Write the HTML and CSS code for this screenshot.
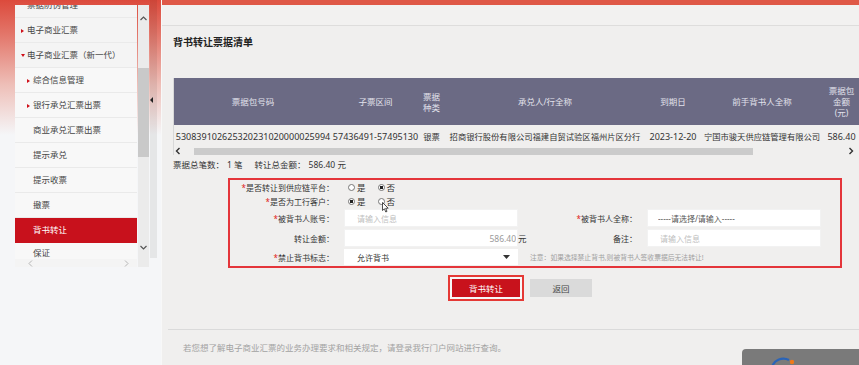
FILE: index.html
```html
<!DOCTYPE html>
<html lang="zh-CN">

<head>
  <meta charset="UTF-8" />
  <meta name="viewport" content="width=device-width, initial-scale=1.0" />
  <title>背书转让</title>
  <link rel="stylesheet" href="styles.css">
</head>

<body>
  <div class="page">
    <aside class="side">
      <div class="menu-box">
        <div class="menu">
          <ul class="menu-list">
            <li class="item top">票据防伪管理</li>
            <li class="item top"><span class="tri"></span>电子商业汇票</li>
            <li class="item top"><span class="tri down"></span>电子商业汇票（新一代）</li>
            <li class="item sub"><span class="tri"></span>综合信息管理</li>
            <li class="item sub"><span class="tri"></span>银行承兑汇票出票</li>
            <li class="item sub plain">商业承兑汇票出票</li>
            <li class="item sub plain">提示承兑</li>
            <li class="item sub plain">提示收票</li>
            <li class="item sub plain">撤票</li>
            <li class="item sub plain active">背书转让</li>
            <li class="item sub plain last">保证</li>
          </ul>
          <div class="hscroll">
            <svg width="5" height="7" viewBox="0 0 5 7"><path d="M4 0.5 L1 3.5 L4 6.5" fill="none" stroke="#b5b5b5" stroke-width="1"/></svg>
            <svg width="5" height="7" viewBox="0 0 5 7"><path d="M1 0.5 L4 3.5 L1 6.5" fill="none" stroke="#b5b5b5" stroke-width="1"/></svg>
          </div>
        </div>
        <div class="vscroll">
          <svg class="up" width="7" height="5" viewBox="0 0 7 5"><path d="M0.5 4 L3.5 1 L6.5 4" fill="none" stroke="#555" stroke-width="1.2"/></svg>
          <div class="thumb"></div>
          <svg class="down" width="7" height="5" viewBox="0 0 7 5"><path d="M0.5 1 L3.5 4 L6.5 1" fill="none" stroke="#555" stroke-width="1.2"/></svg>
        </div>
      </div>
      <div class="split"><span class="split-arrow"></span></div>
    </aside>

    <main class="main">
      <div class="topbar"></div>
      <div class="head"></div>

      <div class="content">
        <h2 class="title">背书转让票据清单</h2>

        <div class="table-wrap">
          <table class="bills">
            <colgroup>
              <col style="width: 158px">
              <col style="width: 87px">
              <col style="width: 25px">
              <col style="width: 202px">
              <col style="width: 54px">
              <col style="width: 124px">
              <col style="width: 35px">
            </colgroup>
            <thead>
              <tr>
                <th>票据包号码</th>
                <th>子票区间</th>
                <th>票据<br>种类</th>
                <th>承兑人/行全称</th>
                <th>到期日</th>
                <th>前手背书人全称</th>
                <th>票据包<br>金额<br>(元)</th>
              </tr>
            </thead>
            <tbody>
              <tr>
                <td>530839102625320231020000025994</td>
                <td>57436491-57495130</td>
                <td class="cn">银票</td>
                <td class="cn">招商银行股份有限公司福建自贸试验区福州片区分行</td>
                <td>2023-12-20</td>
                <td class="cn">宁国市骏天供应链管理有限公司</td>
                <td>586.40</td>
              </tr>
            </tbody>
          </table>
          <div class="tscroll">
            <svg width="6" height="8" viewBox="0 0 6 8"><path d="M4.5 1 L1.5 4 L4.5 7" fill="none" stroke="#333" stroke-width="1.4"/></svg>
            <div class="bar"></div>
            <svg class="right" width="6" height="8" viewBox="0 0 6 8"><path d="M1.5 1 L4.5 4 L1.5 7" fill="none" stroke="#333" stroke-width="1.4"/></svg>
          </div>
        </div>

        <p class="summary">票据总笔数：<span class="num">1 笔</span><span class="gap"></span>转让总金额：<span class="num">586.40 元</span></p>

        <div class="form-box">
          <div class="label"><em>*</em>是否转让到供应链平台：</div>
          <div class="radios">
            <span class="opt"><span class="radio"></span>是</span>
            <span class="opt"><span class="radio on"></span>否</span>
          </div>

          <div class="label"><em>*</em>是否为工行客户：</div>
          <div class="radios">
            <span class="opt"><span class="radio on"></span>是</span>
            <span class="opt"><span class="radio"></span>否</span>
            <svg class="cursor" width="7" height="11" viewBox="0 0 7 11"><path d="M0.5 0.5 L0.5 8.5 L2.4 6.8 L3.8 10 L5 9.4 L3.7 6.3 L6.2 6.2 Z" fill="#fff" stroke="#222" stroke-width="0.8"/></svg>
          </div>

          <div class="label"><em>*</em>被背书人账号：</div>
          <div class="cell"><input class="input" placeholder="请输入信息"></div>
          <div class="label"><em>*</em>被背书人全称：</div>
          <div class="cell"><input class="input dark" value="-----请选择/请输入-----"></div>

          <div class="label">转让金额：</div>
          <div class="cell"><input class="input amount" value="586.40"><span class="unit">元</span></div>
          <div class="label">备注：</div>
          <div class="cell"><input class="input" placeholder="请输入信息"></div>

          <div class="label"><em>*</em>禁止背书标志：</div>
          <div class="cell">
            <div class="select">允许背书
              <svg width="7" height="4" viewBox="0 0 7 4"><path d="M0 0 L7 0 L3.5 4 Z" fill="#333"/></svg>
            </div>
          </div>
          <div class="note">注意：如果选择禁止背书,则被背书人签收票据后无法转让!</div>
        </div>

        <div class="actions">
          <div class="btn-ring"><button class="btn primary">背书转让</button></div>
          <button class="btn back">返回</button>
        </div>
      </div>

      <div class="footer">
        若您想了解电子商业汇票的业务办理要求和相关规定，请登录我行门户网站进行查询。
        <div class="widget">
          <svg width="40" height="16" viewBox="0 0 40 16">
            <path d="M29 11 A 12 12 0 0 0 12 18" fill="none" stroke="#2a64b8" stroke-width="2.2"/>
            <circle cx="32" cy="13" r="2.2" fill="#f07a1a"/>
          </svg>
        </div>
      </div>
    </main>
  </div>
</body>

</html>
```

FILE: styles.css
```css
html,
body {
  margin: 0;
}

body {
  width: 859px;
  height: 365px;
  overflow: hidden;
  font-family: "Noto Sans", "Noto Sans CJK SC", sans-serif;
  font-size: 9px;
  color: #333;
  background-color: #f5f6f8;
}

.page {
  display: flex;
  height: 365px;
}

/* left menu */

.side {
  width: 161px;
  flex: none;
  display: flex;
  align-items: flex-start;
  padding-left: 15px;
  box-sizing: border-box;
  background: linear-gradient(to bottom, #dc4a3c 0, #e3776b 35px, #eebfb8 85px, #f5f6f8 135px);
}

.menu-box {
  display: flex;
  margin-top: 5px;
  height: 262px;
}

.menu {
  width: 122px;
  background-color: #f4f4f4;
  overflow: hidden;
  display: flex;
  flex-direction: column;
}

.menu-list {
  list-style-type: none;
  margin: -12px 0 0;
  padding: 0;
}

.item {
  height: 25px;
  line-height: 24px;
  box-sizing: border-box;
  border-bottom: 1px solid #eaeaea;
  padding-left: 6px;
  font-size: 8.5px;
  color: #454545;
  white-space: nowrap;
}

.item.top {
  padding-left: 12px;
}

.item.top .tri {
  margin-left: -6px;
}

.item.sub {
  padding-left: 12px;
  background-color: #f8f8f8;
}

.item.plain {
  padding-left: 18px;
}

.item.active {
  background-color: #c8111c;
  color: #fff;
  border-bottom-color: #c8111c;
}

.item.last {
  height: 16px;
  line-height: 12px;
  padding-top: 4px;
  border-bottom: 0;
}

.tri {
  display: inline-block;
  width: 0;
  height: 0;
  margin-right: 3px;
  vertical-align: 0;
  border-left: 3px solid #d0101a;
  border-top: 2px solid transparent;
  border-bottom: 2px solid transparent;
}

.tri.down {
  border-left: 2px solid transparent;
  border-right: 2px solid transparent;
  border-top: 3px solid #d0101a;
  border-bottom: 0;
  margin-right: 2px;
  vertical-align: 1px;
}

.hscroll {
  height: 8px;
  display: flex;
  justify-content: space-between;
  align-items: center;
  padding: 0 8px 0 13px;
}

.vscroll {
  width: 11px;
  margin-left: 1px;
  background-color: #ebebeb;
  display: flex;
  flex-direction: column;
  align-items: center;
}

.vscroll .up {
  margin-top: 11px;
}

.vscroll .thumb {
  width: 11px;
  height: 89px;
  margin-top: 47px;
  background-color: #c9c9c9;
}

.vscroll .down {
  margin-top: auto;
  margin-bottom: 17px;
}

.split {
  width: 7px;
  height: 258px;
  margin-left: 1px;
  background-image: radial-gradient(rgba(0, 0, 0, 0.14) 0.6px, transparent 0.8px);
  background-size: 2px 2px;
  padding-top: 97px;
  box-sizing: border-box;
}

.split-arrow {
  display: block;
  width: 0;
  height: 0;
  border-right: 3px solid #222;
  border-top: 3px solid transparent;
  border-bottom: 3px solid transparent;
}

/* main */

.main {
  flex: 1;
  display: flex;
  flex-direction: column;
  background-color: #f0efee;
  border-left: 1px solid #f8f8f8;
  position: relative;
}

.topbar {
  height: 5px;
  background-color: #df5847;
}

.head {
  height: 20px;
  background-color: #f2f1f0;
  border-bottom: 1px solid #dedddc;
}

.content {
  padding-left: 11px;
}

.title {
  margin: 10px 0 0;
  font-size: 10px;
  line-height: 12px;
  font-weight: bold;
  color: #222;
}

.table-wrap {
  margin-top: 30px;
  width: 686px;
  border-left: 1px solid #d8d8d8;
  box-sizing: border-box;
}

.bills {
  width: 685px;
  table-layout: fixed;
  border-collapse: collapse;
}

.bills th {
  height: 47px;
  padding: 0;
  background-color: #6b6a84;
  color: #e2e2ec;
  font-weight: normal;
  font-size: 8.5px;
  line-height: 11px;
  text-align: center;
}

.bills td {
  height: 22px;
  padding: 0;
  font-size: 9px;
  text-align: center;
  white-space: nowrap;
  color: #333;
}

.bills td.cn {
  font-size: 8.3px;
}

.tscroll {
  height: 8px;
  display: flex;
  align-items: center;
  padding-left: 1px;
}

.tscroll .bar {
  width: 559px;
  height: 7px;
  margin-left: 13px;
  background-color: #cbcbcb;
}

.tscroll .right {
  margin-left: auto;
  margin-right: 5px;
}

.summary {
  margin: 4px 0 0;
  line-height: 12px;
  font-size: 8.5px;
  color: #333;
}

.summary .num {
  margin-left: 3px;
}

.summary .gap {
  display: inline-block;
  width: 12px;
}

/* form */

.form-box {
  margin: 7px 0 0 55px;
  width: 614px;
  box-sizing: border-box;
  border: 2px solid #e4353a;
  padding-right: 19px;
  display: grid;
  grid-template-columns: 104px 174px 109px 174px;
  grid-template-rows: 14px 14px 20px 20px 18px;
  column-gap: 10px;
  align-items: center;
}

.label {
  text-align: right;
  font-size: 8px;
  color: #333;
  white-space: nowrap;
}

.label em {
  font-style: normal;
  color: #e02020;
}

.radios {
  grid-column: span 3;
  display: flex;
  align-items: center;
  gap: 12px;
  padding-left: 4px;
  position: relative;
  height: 14px;
}

.opt {
  display: flex;
  align-items: center;
  gap: 2px;
  font-size: 8.5px;
}

.radio {
  width: 7px;
  height: 7px;
  box-sizing: border-box;
  border: 1px solid #777;
  border-radius: 50%;
  background-color: #fff;
}

.radio.on {
  background: radial-gradient(circle, #222 0 1.5px, #fff 2px);
}

.cursor {
  position: absolute;
  left: 38px;
  top: 8px;
}

.cell {
  display: flex;
  align-items: center;
}

.input {
  width: 174px;
  height: 18px;
  flex: none;
  box-sizing: border-box;
  border: 1px solid #f2f2f2;
  background-color: #fff;
  padding: 0 12px;
  font-family: "Noto Sans", "Noto Sans CJK SC", sans-serif;
  font-size: 8px;
  color: #333;
  outline: none;
}

.input::placeholder {
  color: #c0c0c0;
}

.input.dark {
  color: #555;
  padding-left: 10px;
}

.input.amount {
  text-align: right;
  padding-right: 1px;
  color: #9a9a9a;
  font-size: 8.5px;
}

.unit {
  font-size: 8.5px;
  color: #333;
  white-space: nowrap;
}

.select {
  width: 174px;
  height: 16px;
  box-sizing: border-box;
  background-color: #fff;
  padding: 0 8px 0 13px;
  font-size: 8px;
  color: #333;
  display: flex;
  align-items: center;
  justify-content: space-between;
}

.note {
  grid-column: span 2;
  padding-left: 2px;
  font-size: 6.8px;
  color: #a0a0a0;
  white-space: nowrap;
}

/* buttons */

.actions {
  display: flex;
  align-items: center;
  gap: 6px;
  margin-top: 7px;
  padding-left: 275px;
}

.btn-ring {
  border: 2px solid #e53935;
  padding: 2px 2px;
  background-color: #f7f7f7;
}

.btn {
  height: 18px;
  border: 0;
  padding: 0;
  font-family: "Noto Sans", "Noto Sans CJK SC", sans-serif;
  font-size: 8.5px;
  cursor: pointer;
}

.btn.primary {
  width: 68px;
  background-color: #c8121c;
  color: #fff;
}

.btn.back {
  width: 62px;
  background-color: #dadada;
  color: #444;
}

/* footer */

.footer {
  margin: auto 0 0 6px;
  height: 36px;
  box-sizing: border-box;
  border-top: 1px solid #dadada;
  padding: 12px 0 0 15px;
  line-height: 12px;
  font-size: 8.5px;
  color: #a2a2a2;
  position: relative;
}

.widget {
  position: absolute;
  right: 0;
  bottom: 0;
  width: 117px;
  height: 16px;
  background-color: #7a7a7a;
  border-radius: 4px 0 0 0;
  padding-left: 18px;
  box-sizing: border-box;
}

.widget svg {
  display: block;
}
```
